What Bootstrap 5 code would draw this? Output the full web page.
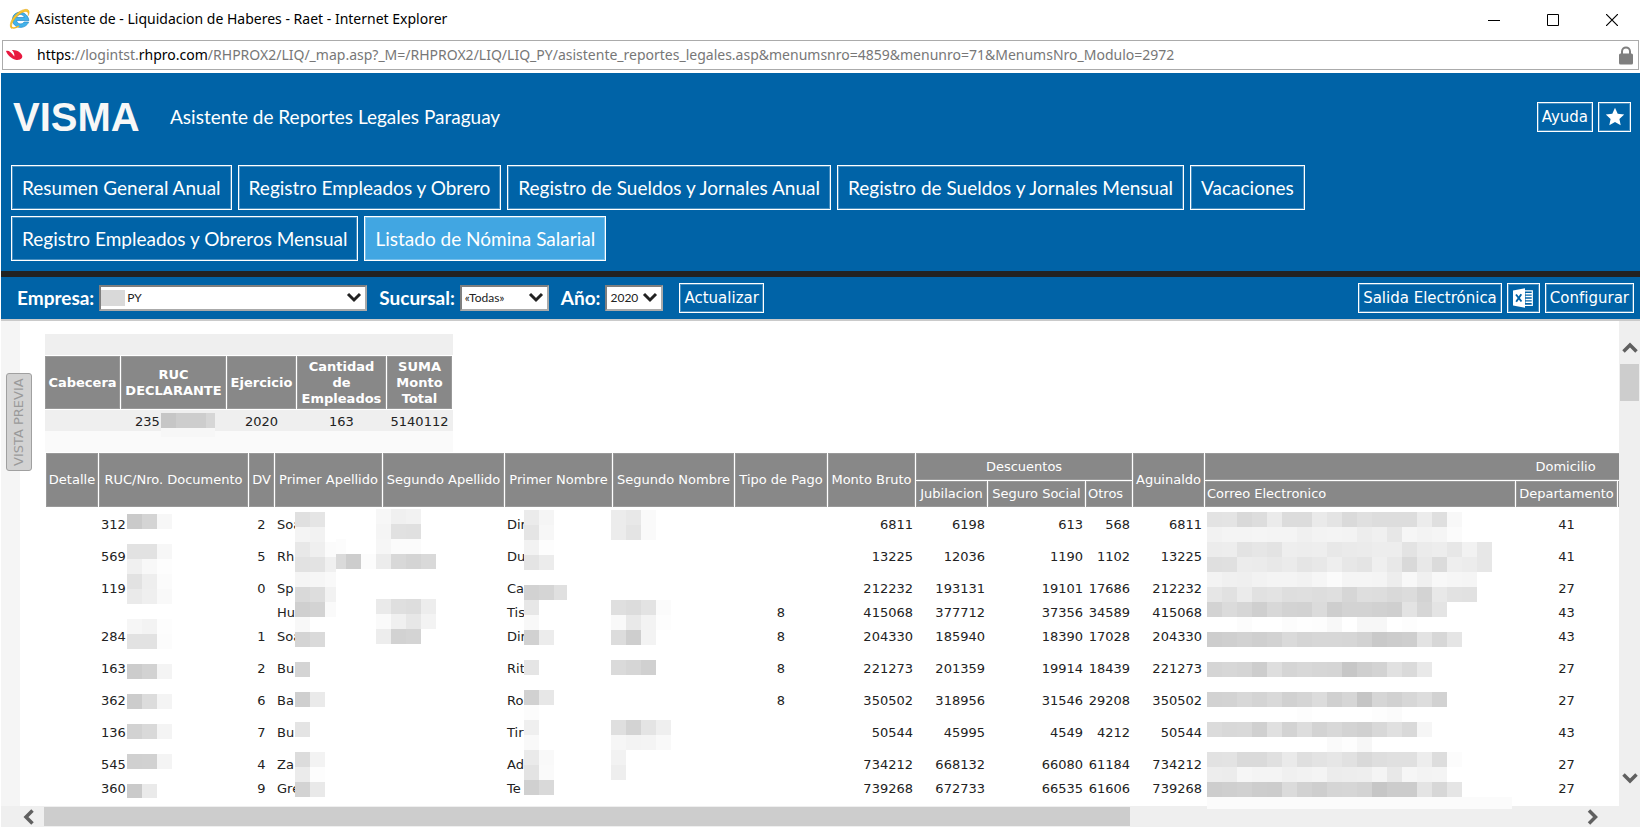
<!DOCTYPE html>
<html lang="es">
<head>
<meta charset="utf-8">
<meta name="viewport" content="width=device-width, initial-scale=1">
<title>Asistente de - Liquidacion de Haberes - Raet</title>
<link href="https://cdn.jsdelivr.net/npm/bootstrap@5.3.0/dist/css/bootstrap.min.css" rel="stylesheet">
<style>
  :root { --brand: #0063a7; --head: #888; --track: #efefef; --thumb: #cdcdcd; }
  body { font-family: "DejaVu Sans", Verdana, sans-serif; font-size: 13px; line-height: 16px; color: #222; background: #fff; }
  .win-title { height: 38px; margin-bottom: 2px; padding-left: 9px; font: 14px/20px "Noto Sans", "Segoe UI", sans-serif; color: #000; }
  .win-btn { width: 59px; height: 38px; border: 0; background: none; padding: 0; }
  .addr { height: 30px; margin: 0 2px; border: 1px solid #ababab; padding: 0 5px 0 3px; font: 14px/20px "Noto Sans", "Segoe UI", sans-serif; }
  .url-text { color: #777; white-space: nowrap; margin-left: 14px; }
  .url-text b { color: #000; font-weight: 400; }
  .brand-bg { background: var(--brand); color: #fff; }
  .app { margin: 3px 1px 0; }
  .top-row { height: 92px; padding: 0 9px 4px 12px; }
  .logo-text { font: bold 40px/48px "Liberation Sans", sans-serif; width: 157px; color: #f7f7f7; }
  .page-title { font: 19px/24px Lato, Calibri, sans-serif; }
  .flat { border: 1px solid #fff; box-shadow: inset 0 0 0 1px rgba(255,255,255,.28); background: var(--brand); color: #fff; }
  .tool-set { gap: 5px; }
  .tool { height: 30px; padding: 0 4px; font-size: 15px; line-height: 20px; white-space: nowrap; }
  .tool-icon { width: 33px; }
  .tabs { gap: 6px; padding: 0 10px 10px; }
  .tab-line { gap: 6px; }
  .tab-item { height: 45px; padding: 0 10px; font: 19px/24px Lato, Calibri, sans-serif; }
  .tab-item.active { background: #41a6e2; }
  .strip { height: 6px; background: #222; }
  .filters { height: 42px; padding: 0 6px 0 16px; }
  .filters label { font: bold 19px/24px Lato, Calibri, sans-serif; }
  .pick { height: 26px; border: 2px solid #7f7f7f; border-right-color: #aaa; border-bottom-color: #aaa; border-radius: 0; color: #222; font: 12px/20px Lato, Calibri, sans-serif; padding: 0 0 0 3px; margin-left: 5px; appearance: none;
    background: #fff url("data:image/svg+xml,%3Csvg xmlns='http://www.w3.org/2000/svg' width='16' height='12'%3E%3Cpath d='M2 2l6 6 6-6' fill='none' stroke='%23222' stroke-width='3'/%3E%3C/svg%3E") no-repeat right 3px center; }
  .pick-co { width: 268px; padding-left: 26px; }
  .pick-su { width: 89px; }
  .pick-an { width: 58px; }
  .hide-co { top: 5px; left: 7px; width: 24px; height: 16px; background: #d9d9d9; }
  .rail { width: 19px; background: #f5f5f5; }
  .preview { left: 5px; top: 52px; width: 26px; height: 98px; border: 1px solid #a0a0a0; border-radius: 3px; background: #d2d2d2; color: #9a9a9a; writing-mode: vertical-rl; font-size: 13px; padding: 0; }
  .preview span { display: block; transform: rotate(180deg); }
  .work { border-top: 2px solid #cacaca; }
  .pane { padding: 13px 0 9px 25px; overflow: hidden; min-width: 0; }
  .grid { border-collapse: separate; border-spacing: 0; table-layout: fixed; margin: 0; }
  .grid th { background: var(--head); background-clip: padding-box; color: #fff; font-weight: 400; border: 0 solid #fff; border-right-width: 1px; box-shadow: inset 0 0 0 1px #999; padding: 0 2px; text-align: center; vertical-align: middle; white-space: nowrap; }
  .grid td { padding: 2px 3px 0 2px; line-height: 14px; vertical-align: middle; white-space: nowrap; }
  .sum { width: 408px; }
  .sum th { font-weight: 700; height: 55px; border-top-width: 1px; border-bottom-width: 1px; white-space: normal; }
  .sum td { height: 21px; background: var(--track); }
  .sum .ruc { padding-left: 14px; }
  .sum .foot td { background: #fafafa; }
  .list { width: 1881px; margin: 1px 0 0 1px; }
  .list th { border-bottom-width: 1px; }
  .list thead tr:first-child th { height: 28px; }
  .list thead tr:last-child th { height: 27px; }
  .list tbody td { height: 32px; }
  .list tbody tr.slim td { height: 16px; }
  .num { text-align: right; }
  .vbar { width: 21px; background: var(--track); padding-top: 16px; }
  .vbar .grip { height: 37px; margin: 8px 1px 0; background: var(--thumb); }
  .hbar { height: 21px; margin-bottom: 1px; background: var(--track); padding-left: 18px; }
  .hbar .grip { width: 67%; height: 19px; background: var(--thumb); }
  .mosaic { left: 0; top: 0; pointer-events: none; overflow: visible; }
</style>
</head>
<body class="d-flex flex-column min-vh-100 overflow-hidden">
<header>
  <div class="win-title d-flex align-items-center">
    <svg class="me-1" width="22" height="22" viewBox="0 0 22 22" aria-hidden="true">
      <path d="M20 12.5H7.6c.3 3.8 5.800 4.600 7.500 1.500h4.500C16.500 22 3.500 21 3.500 11.500S18 1.500 20 12.500ZM7.700 9.500h7.500c-.4-4-7-4-7.500 0Z" fill="#43b3ea" stroke="#2388c9" stroke-width=".7"/>
      <path d="M2.500 20.500C-2 16 7 2.500 16 1.400c4.500-.6 5 3 3 6.300.9-3-.5-4.800-3.500-4C9 5 1 15 2.500 20.500Z" fill="#f9c62d" stroke="#dfa21a" stroke-width=".5"/>
      <path d="M2 17.500c.5 4 5 2.500 8 .500" fill="none" stroke="#f2b824" stroke-width="1.500"/>
    </svg>
    <span class="flex-grow-1">Asistente de - Liquidacion de Haberes - Raet - Internet Explorer</span>
    <button class="win-btn" aria-label="Minimizar"><svg width="12" height="12"><path d="M0 6.500h12" stroke="#000"/></svg></button>
    <button class="win-btn" aria-label="Maximizar"><svg width="12" height="12"><path d="M.5.5h11v11H.5z" fill="none" stroke="#000"/></svg></button>
    <button class="win-btn" aria-label="Cerrar"><svg width="12" height="12"><path d="M0 0l12 12M12 0L0 12" stroke="#000" stroke-width="1.200"/></svg></button>
  </div>
  <div class="addr d-flex align-items-center">
    <svg width="17" height="12" viewBox="0 0 17 12" aria-hidden="true"><path d="M0 2C2.500 1 5 3 8.300 7.500 8.800 5 7.500 2.500 5.800 1c5-.5 9.500 2.500 10.500 6 .3 3-3.300 4.500-6.800 3.700C5.500 9.800 1.300 6 0 2Z" fill="#e8193f"/></svg>
    <div class="url-text flex-grow-1"><b>https</b>://logintst.<b>rhpro.com</b>/RHPROX2/LIQ/_map.asp?_M=/RHPROX2/LIQ/LIQ_PY/asistente_reportes_legales.asp&amp;menumsnro=4859&amp;menunro=71&amp;MenumsNro_Modulo=2972</div>
    <svg width="14" height="19" viewBox="0 0 14 19" aria-hidden="true"><path d="M3 9V5.500C3 0 11 0 11 5.500V9" fill="none" stroke="#7f7f7f" stroke-width="2"/><rect y="7.500" width="14" height="11" rx="1.500" fill="#7f7f7f"/></svg>
  </div>
</header>

<main class="app flex-grow-1 d-flex flex-column">
  <div class="brand-bg">
    <div class="top-row d-flex align-items-center">
      <div class="logo-text">VISMA</div>
      <div class="page-title flex-grow-1">Asistente de Reportes Legales Paraguay</div>
      <div class="tool-set d-flex">
        <button class="flat tool">Ayuda</button>
        <button class="flat tool tool-icon" aria-label="Favoritos"><svg width="20" height="20" viewBox="0 0 20 20"><path d="M10 .8l2.700 6 6.500.7-4.800 4.400 1.300 6.400L10 15.100l-5.700 3.200 1.300-6.400L.8 7.500l6.500-.7Z" fill="#fff"/></svg></button>
      </div>
    </div>
    <nav class="tabs d-flex flex-column">
      <div class="tab-line d-flex flex-wrap">
        <button class="flat tab-item">Resumen General Anual</button>
        <button class="flat tab-item">Registro Empleados y Obrero</button>
        <button class="flat tab-item">Registro de Sueldos y Jornales Anual</button>
        <button class="flat tab-item">Registro de Sueldos y Jornales Mensual</button>
        <button class="flat tab-item">Vacaciones</button>
      </div>
      <div class="tab-line d-flex flex-wrap">
        <button class="flat tab-item">Registro Empleados y Obreros Mensual</button>
        <button class="flat tab-item active">Listado de Nómina Salarial</button>
      </div>
    </nav>
  </div>
  <div class="strip"></div>
  <div class="filters brand-bg d-flex align-items-center">
    <label for="emp">Empresa:</label>
    <div class="position-relative d-flex"><select id="emp" class="pick pick-co"><option>PY</option></select><span class="hide-co position-absolute"></span></div>
    <label for="suc" class="ms-2 ps-1">Sucursal:</label>
    <select id="suc" class="pick pick-su"><option>«Todas»</option></select>
    <label for="ano" class="ms-2 ps-1">Año:</label>
    <select id="ano" class="pick pick-an"><option>2020</option></select>
    <button class="flat tool ms-3">Actualizar</button>
    <div class="tool-set d-flex ms-auto">
      <button class="flat tool">Salida Electrónica</button>
      <button class="flat tool tool-icon" aria-label="Exportar a Excel"><svg width="20" height="20" viewBox="0 0 20 20"><path d="M0 2.500L12 .3v19.400L0 17.500Z" fill="#fff"/><path d="M12 2.800h7.300v14.500H12" fill="none" stroke="#fff" stroke-width="1.200"/><path d="M12.500 5.800H19M12.500 8.600H19M12.500 11.400H19M12.500 14.200H19" stroke="#fff" stroke-width="1.500"/><path d="M3 6.500l5.500 7M8.300 6.300L3.200 13.700" stroke="#0063a7" stroke-width="1.900"/></svg></button>
      <button class="flat tool">Configurar</button>
    </div>
  </div>

  <div class="work position-relative flex-grow-1 d-flex">
    <div class="rail flex-shrink-0"></div>
    <div class="pane flex-grow-1">
      <table class="grid sum">
        <colgroup><col style="width:76px"><col style="width:106px"><col style="width:70px"><col style="width:90px"><col style="width:66px"></colgroup>
        <tbody>
          <tr><td colspan="5"></td></tr>
          <tr><th scope="col">Cabecera</th><th scope="col">RUC DECLARANTE</th><th scope="col">Ejercicio</th><th scope="col">Cantidad de Empleados</th><th scope="col">SUMA Monto Total</th></tr>
          <tr><td></td><td class="ruc">235</td><td class="text-center">2020</td><td class="text-center">163</td><td class="text-center">5140112</td></tr>
          <tr class="foot"><td colspan="5"></td></tr>
        </tbody>
      </table>
      <table class="grid list">
        <colgroup><col style="width:53px"><col style="width:150px"><col style="width:26px"><col style="width:108px"><col style="width:122px"><col style="width:108px"><col style="width:122px"><col style="width:93px"><col style="width:88px"><col style="width:72px"><col style="width:98px"><col style="width:47px"><col style="width:72px"><col style="width:311px"><col style="width:102px"><col style="width:309px"></colgroup>
        <thead>
          <tr><th rowspan="2">Detalle</th><th rowspan="2">RUC/Nro. Documento</th><th rowspan="2">DV</th><th rowspan="2">Primer Apellido</th><th rowspan="2">Segundo Apellido</th><th rowspan="2">Primer Nombre</th><th rowspan="2">Segundo Nombre</th><th rowspan="2">Tipo de Pago</th><th rowspan="2">Monto Bruto</th><th colspan="3">Descuentos</th><th rowspan="2">Aguinaldo</th><th colspan="3">Domicilio</th></tr>
          <tr><th>Jubilacion</th><th>Seguro Social</th><th class="text-start">Otros</th><th class="text-start">Correo Electronico</th><th>Departamento</th><th></th></tr>
        </thead>
        <tbody id="rows"></tbody>
      </table>
    </div>
    <div class="vbar flex-shrink-0 d-flex flex-column">
      <svg class="mx-auto" width="16" height="19" viewBox="0 0 16 19"><path d="M1.500 14.500L8 8l6.500 6.500" fill="none" stroke="#606060" stroke-width="3.500"/></svg>
      <div class="grip"></div>
      <svg class="mx-auto mt-auto mb-3" width="16" height="19" viewBox="0 0 16 19"><path d="M1.500 3.500L8 10l6.500-6.500" fill="none" stroke="#606060" stroke-width="3.500"/></svg>
    </div>
    <button class="preview position-absolute"><span>VISTA PREVIA</span></button>
    <svg class="mosaic position-absolute" width="1" height="1" shape-rendering="crispEdges" aria-hidden="true"><g id="cells" transform="translate(-1 -321)"></g></svg>
  </div>
  <div class="hbar d-flex align-items-center">
    <svg width="25" height="16" viewBox="0 0 25 16"><path d="M13.500 1.500L7 8l6.500 6.500" fill="none" stroke="#606060" stroke-width="3.500"/></svg>
    <div class="grip"></div>
    <svg class="ms-auto me-4" width="30" height="16" viewBox="0 0 30 16"><path d="M3 1.500L9.500 8 3 14.500" fill="none" stroke="#606060" stroke-width="3.500"/></svg>
  </div>
</main>

<script src="https://cdn.jsdelivr.net/npm/bootstrap@5.3.0/dist/js/bootstrap.bundle.min.js"></script>
<script>
  // document, DV, surname, name, payment type, gross, pension, social security, others, bonus, department
  const data = [
    ['312','2','Soa','Dir','','6811','6198','613','568','6811','41'],
    ['569','5','Rh','Du','','13225','12036','1190','1102','13225','41'],
    ['119','0','Sp','Ca','','212232','193131','19101','17686','212232','27'],
    ['','','Hu','Tis','8','415068','377712','37356','34589','415068','43'],
    ['284','1','Soa','Dir','8','204330','185940','18390','17028','204330','43'],
    ['163','2','Bu','Rit','8','221273','201359','19914','18439','221273','27'],
    ['362','6','Ba','Ro','8','350502','318956','31546','29208','350502','27'],
    ['136','7','Bu','Tir','','50544','45995','4549','4212','50544','43'],
    ['545','4','Za','Ad','','734212','668132','66080','61184','734212','27'],
    ['360','9','Gre','Te','','739268','672733','66535','61606','739268','27']
  ];
  document.getElementById('rows').innerHTML = data.map((r, i) => {
    const n = v => `<td class="num">${v}</td>`;
    return `<tr${i === 3 || i === 9 ? ' class="slim"' : ''}><td></td><td>${r[0]}</td><td class="text-center">${r[1]}</td><td>${r[2]}</td><td></td><td>${r[3]}</td><td></td><td class="text-center">${r[4]}</td>${r.slice(5, 10).map(n).join('')}<td></td><td class="text-center">${r[10]}</td><td></td></tr>`;
  }).join('');

  // privacy mosaic: x, y, grey levels of consecutive 15px blocks, then height and width of a cut block
  const blocks = [
    [161,413,'c6cdcd'],[206,413,'d6',15,9],[161,428,'f7f7f7',9],[206,428,'f7',9,9],
    [127,514,'cad4f7'],[127,544,'e2e2f7'],[127,559,'f0f8fd'],[127,574,'e2eefb'],[127,589,'eaeff9'],[127,619,'f6f3fd'],[127,634,'e2e2fc'],[127,664,'ccd2f4'],[127,694,'ccdcf4'],[127,724,'d2d9f4'],[127,754,'d0d1f4'],[127,784,'caea',14],
    [295,512,'e0e5'],[295,527,'f4f2'],[295,542,'e8ef'],[325,542,'fb',15,11],[295,557,'e2e3'],[325,557,'f0',15,11],[295,572,'f5f6'],[325,572,'f9',15,11],[295,587,'d9dd'],[325,587,'f2',15,11],[295,602,'cfd3'],[325,602,'fa',15,11],[295,617,'f8'],[295,632,'d4da'],[295,662,'d4'],[295,692,'cfea'],[295,722,'e4'],[295,752,'dcf3'],[295,767,'ebfd'],[295,782,'d3e9'],
    [336,539,'fc',15,10],[336,554,'da',15,10],[346,554,'cdfc'],
    [376,509,'f7f0f2'],[376,524,'f5e1e0'],[376,539,'f6fbfb'],[376,554,'ecd8d4d9'],[376,599,'eadfdded'],[376,614,'faf0e7f3'],[376,629,'edd2d4'],
    [524,510,'ebf5'],[524,525,'e5f7'],[524,540,'f2fd'],[524,555,'e4ec'],[524,585,'d2d5'],[554,585,'e0',15,13],[524,600,'e7'],[524,615,'f8'],[524,630,'d1ec'],[524,660,'e5'],[524,690,'d1e7'],[524,705,'fc'],[524,720,'ef'],[524,735,'f9'],[524,750,'eaf9'],[524,765,'e3fa'],[524,780,'d0d9'],
    [611,510,'ece8fa'],[611,525,'ece4fa'],[611,600,'dfdce3fb'],[611,615,'f9e9f3fd'],[611,630,'dccef3'],[611,660,'dad6d0'],[611,720,'dfd3e4ef'],[611,735,'f6f3f4f9'],[611,750,'f2'],[611,765,'ee'],
    [1207,512,'e3e4d9ddebdcdceae4dae0ddddddecdff8'],[1207,527,'f2f4f4f5f4f4f0f3f4f3edf0e7f6f3f5fb'],
    [1207,542,'ecede3e6e3eeedeee8eaebedede3ebede7f2e7'],[1207,557,'dfe0ecebe8ebe5e8eee7e4efe8d9e8dbeeece7'],
    [1207,572,'f3f0eff2f4f4f2f6fbf5f5f4edf8f0f8f6f5'],[1207,587,'e6e1ebe1e3dedfdddfd6deddd9dcd3e8e2e1'],
    [1207,602,'d3dbd6cfd8d3d2dbced3d3d1cfe3d6e4'],[1207,617,'fffffcfffffcfefdf8fff7f7fffd'],
    [1207,632,'cdcfd2cfd2dad5d7d7d6d2c9cccee3d7e5'],[1207,662,'d5d7d5cdded5d8d6d5c7cfd3e1dae9'],
    [1207,692,'d2d3d8d4d9d1d5dcd0d6c5d6d1d7ddd2'],[1207,707,'fffffffffffffdfffffffffdfb'],
    [1207,722,'dbd8d9d0e0d3ddd3d8d3d0d8e0d9f6'],[1207,737,'fffffffffffffffffafdf7'],
    [1207,752,'e2e3dadae0eadfe3e6e1d9dee0e0edddfc'],[1207,767,'edecf6f4f4f0f2f4ecedeef4e8f6f3f4'],
    [1207,782,'cdcfd1cdccdbd2ced5d6d3c6cccce4d7e5'],[1207,797,'fb',12,305]
  ];
  document.getElementById('cells').innerHTML = blocks.map(([x, y, s, h = 15, w = 15]) =>
    s.match(/../g).map((g, i) => `<rect x="${x + i * 15}" y="${y}" width="${w}" height="${h}" fill="#${g}${g}${g}"/>`).join('')).join('');
</script>
</body>
</html>
